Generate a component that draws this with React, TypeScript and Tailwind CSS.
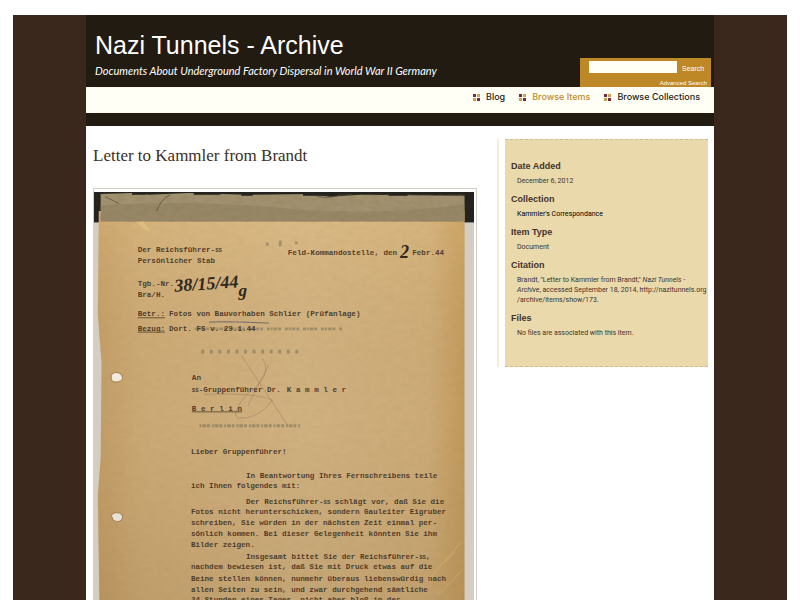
import React from "react";

type Line = { x: number; y: number; parts: string[] };

// "SS" is typed on a single key, so it is set smaller than the rest of the line.
const typed: Line[] = [
  { x: 46, y: 63, parts: ["Der Reichsführer-", "SS"] },
  { x: 46, y: 75, parts: ["Persönlicher Stab"] },
  { x: 204, y: 66, parts: ["Feld-Kommandostelle, den"] },
  { x: 335, y: 66, parts: ["Febr.44"] },
  { x: 46, y: 99, parts: ["Tgb.-Nr."] },
  { x: 46, y: 110, parts: ["Bra/H."] },
  { x: 79, y: 131, parts: ["Fotos von Bauvorhaben Schlier (Prüfanlage)"] },
  { x: 79, y: 146, parts: ["Dort. FS v. 29.1.44"] },
  { x: 103, y: 198, parts: ["An"] },
  { x: 103, y: 210, parts: ["", "SS", "-Gruppenführer Dr."] },
  { x: 203, y: 210, parts: ["K a m m l e r"] },
  { x: 102, y: 276, parts: ["Lieber Gruppenführer!"] },
  { x: 160, y: 301, parts: ["In Beantwortung Ihres Fernschreibens teile"] },
  { x: 102, y: 312, parts: ["ich Ihnen folgendes mit:"] },
  { x: 160, y: 328, parts: ["Der Reichsführer-", "SS", " schlägt vor, daß Sie die"] },
  { x: 102, y: 339, parts: ["Fotos nicht herunterschicken, sondern Gauleiter Eigruber"] },
  { x: 102, y: 351, parts: ["schreiben, Sie würden in der nächsten Zeit einmal per-"] },
  { x: 102, y: 362, parts: ["sönlich kommen. Bei dieser Gelegenheit könnten Sie ihm"] },
  { x: 102, y: 374, parts: ["Bilder zeigen."] },
  { x: 160, y: 386, parts: ["Insgesamt bittet Sie der Reichsführer-", "SS", ","] },
  { x: 102, y: 397, parts: ["nachdem bewiesen ist, daß Sie mit Druck etwas auf die"] },
  { x: 102, y: 409, parts: ["Beine stellen können, nunmehr überaus liebenswürdig nach"] },
  { x: 102, y: 421, parts: ["allen Seiten zu sein, und zwar durchgehend sämtliche"] },
  { x: 102, y: 432, parts: ["24 Stunden eines Tages, nicht aber bloß in der"] },
];

const underlined: Line[] = [
  { x: 46, y: 131, parts: ["Betr.:"] },
  { x: 46, y: 146, parts: ["Bezug:"] },
  { x: 103, y: 230, parts: ["B e r l i n"] },
];

function Letter() {
  return (
    <svg viewBox="0 0 400 450" className="block w-full" role="img" aria-label="Scan of the letter">
      <defs>
        <linearGradient id="paper" x1="0" y1="0" x2="1" y2="0">
          <stop offset="0" stopColor="#c49f68" />
          <stop offset="0.12" stopColor="#ceac78" />
          <stop offset="0.55" stopColor="#d3b483" />
          <stop offset="0.9" stopColor="#cfae7a" />
          <stop offset="1" stopColor="#c39b5d" />
        </linearGradient>
        <linearGradient id="shade" x1="0" y1="0" x2="0" y2="1">
          <stop offset="0" stopColor="#ffd994" stopOpacity="0.18" />
          <stop offset="0.5" stopColor="#8a6a3c" stopOpacity="0.04" />
          <stop offset="1" stopColor="#6a4a20" stopOpacity="0.16" />
        </linearGradient>
        <filter id="grain" x="0" y="0" width="1" height="1">
          <feTurbulence type="fractalNoise" baseFrequency="0.12 0.2" numOctaves="3" seed="4" />
          <feColorMatrix values="0 0 0 0 0.25  0 0 0 0 0.18  0 0 0 0 0.08  0.9 0 0 0 -0.3" />
        </filter>
      </defs>
      <rect width="400" height="450" fill="#d3cdc4" />
      <rect width="400" height="32" fill="#24231d" />
      <path d="M5 30 L4 130 L8 180 L7 280 L4 320 L6 450 H390 V20 H5Z" fill="url(#paper)" />
      <path d="M5 30 L4 130 L8 180 L7 280 L4 320 L6 450 H390 V20 H5Z" fill="url(#shade)" />
      <path d="M7 2 L40 1 L58 3 L100 1 L160 3 L230 2 L248 5 L280 3 L390 4 V31 H7Z" fill="#a19170" />
      <path d="M7 14 Q100 8 200 17 T390 13 V31 H7Z" fill="#8e8060" opacity="0.55" />
      <rect x="7" y="3" width="383" height="28" filter="url(#grain)" opacity="0.6" />
      <rect x="7" y="31" width="383" height="419" filter="url(#grain)" opacity="0.14" />
      <g fill="none" stroke="#4c4432" strokeWidth="1">
        <path d="M66 20 Q70 8 80 3 M230 2 Q242 9 260 3 M12 5 L26 12" opacity="0.7" />
        <path d="M40 2 h14 M105 2 h28 M155 3 h12 M220 3 h32 M310 3 h20" stroke="#24231d" strokeWidth="2" />
      </g>
      <path d="M44 31 l8 0 l7 10 l-6 -2Z" fill="#ecca80" opacity="0.5" />

      {/* Ink of the reverse side showing through */}
      <g fill="none" stroke="#66644f" strokeWidth="3" opacity="0.45">
        <path d="M106 144 H262" strokeDasharray="3 1 2 1 4 1 3 4" />
        <path d="M113 168 H220" strokeDasharray="3 6" strokeWidth="4" />
        <path d="M111 246 H218" strokeDasharray="2 1 4 1 3 2" />
        <path d="M196 51 v6 M213 52 v3 M181 55 h3" />
      </g>
      <g fill="none" stroke="#966b58" strokeWidth="1" opacity="0.42">
        <path d="M155 172 Q170 194 204 246 M177 175 Q190 192 160 214 Q145 232 151 238 Q173 240 188 219 Q169 211 116 213 M162 225 L184 182" />
      </g>
      <path d="M121 137 Q142 136 184 138" stroke="#56546a" strokeWidth="1" fill="none" opacity="0.8" />

      <g
        className="font-['Liberation_Mono',monospace] font-bold"
        fontSize="8"
        fill="#3a2b1b"
        fillOpacity="0.88"
      >
        {typed.map((line) => (
          <text key={`${line.x}-${line.y}`} x={line.x} y={line.y} className="whitespace-pre">
            {line.parts.map((part, i) => (
              <tspan key={i} fontSize={i === 1 ? 6 : 8}>
                {part}
              </tspan>
            ))}
          </text>
        ))}
        {underlined.map((line) => (
          <text key={line.y} x={line.x} y={line.y} className="underline">
            {line.parts[0]}
          </text>
        ))}
      </g>
      <g className="font-['Liberation_Serif',serif] italic" fill="#30271d">
        <text x="85" y="105" fontSize="19" className="font-bold" transform="rotate(-4 85 105)">
          38/15/44
        </text>
        <text x="152" y="109" fontSize="18" className="font-bold">
          g
        </text>
        <text x="322" y="69" fontSize="19" className="font-bold">
          2
        </text>
      </g>

      <g stroke="#a07a45" strokeWidth="1">
        <path d="M18 195 Q18 190 24 190 Q30 191 30 196 Q29 200 23 200 Q18 200 18 195Z" fill="#f1ece0" />
        <path d="M18 340 Q22 336 27 338 Q32 341 29 345 Q25 349 20 345Z" fill="#e6e1d9" />
      </g>
      <g fill="none" stroke="#ddb977" strokeWidth="1" opacity="0.5">
        <path d="M350 410 L387 368 M362 424 L388 398 M368 391 L380 379" />
      </g>
    </svg>
  );
}

function Bullet() {
  return (
    <svg viewBox="0 0 7 7" className="h-[7px] w-[7px] shrink-0" aria-hidden="true">
      <rect width="3" height="3" fill="#7c2740" />
      <rect x="4" width="3" height="3" fill="#cfa04c" />
      <rect y="4" width="3" height="3" fill="#cfa04c" />
      <rect x="4" y="4" width="3" height="3" fill="#7c2740" />
    </svg>
  );
}

function NavLink({ active, children }: { active?: boolean; children: React.ReactNode }) {
  return (
    <li className="flex items-center gap-[6px]">
      <Bullet />
      <a href="#" className={active ? "text-[#c48a2c]" : "text-[#231c17]"}>
        {children}
      </a>
    </li>
  );
}

function Field({ label, children }: { label: string; children: React.ReactNode }) {
  return (
    <div>
      <dt className="text-[9px] leading-[14px] font-bold">{label}</dt>
      <dd className="mt-[3px] pl-[6px] font-['Roboto',sans-serif] text-[7px] leading-[10px]">{children}</dd>
    </div>
  );
}

export default function App() {
  return (
    <div className="h-screen overflow-hidden bg-white px-[13px] pt-[15px] font-['Liberation_Sans',Arial,sans-serif]">
      <div className="min-h-full bg-[#3b281c]">
        <div className="mx-auto min-h-screen max-w-[628px] bg-white">
          <header className="flex h-[72px] items-end justify-between bg-[#211b12] pr-[3px] pl-[9px] text-white">
            <div className="pb-[9px]">
              <h1 className="text-[25px] leading-[30px]">Nazi Tunnels - Archive</h1>
              <p className="mt-1 font-['Lato',sans-serif] text-[11px] leading-[14px] whitespace-nowrap italic">
                Documents About Underground Factory Dispersal in World War II Germany
              </p>
            </div>
            <form
              className="flex h-[29px] w-[131px] flex-col justify-between bg-[#be8826] pt-[3px] pr-1 pl-[9px] text-[7px] leading-[8px]"
              onSubmit={(e) => e.preventDefault()}
            >
              <div className="flex items-center gap-[5px]">
                <input type="text" aria-label="Search the archive" className="h-[12px] w-[88px] bg-[#fffff6] px-1 text-black" />
                <button type="submit" className="pt-1">Search</button>
              </div>
              <a href="#" className="self-end text-[6px]">
                Advanced Search
              </a>
            </form>
          </header>
          <nav className="h-[26px] bg-[#fffff6] pt-[4px] pr-[14px]">
            <ul className="flex justify-end gap-[14px] font-['Inter',sans-serif] text-[9px] leading-[12px] font-medium">
              <NavLink>Blog</NavLink>
              <NavLink active>Browse Items</NavLink>
              <NavLink>Browse Collections</NavLink>
            </ul>
          </nav>
          <div className="h-[13px] bg-[#211b12]" />

          <div className="flex items-start gap-5 pt-[13px] pr-[6px] pl-[7px]">
            <main className="min-w-0 flex-1">
              <h2 className="pt-[7px] font-['Liberation_Serif',serif] text-[17px] leading-[20px] text-[#403025]">
                Letter to Kammler from Brandt
              </h2>
              <div className="mt-[22px] border border-[#cfd0c3] pt-[3px] pr-[2px]">
                <Letter />
              </div>
            </main>
            <aside className="w-[211px] shrink-0 border-l-2 border-[#f6eedb] pl-[6px]">
              <dl className="flex h-[228px] flex-col gap-[6px] border-y border-dashed border-[#cdbd91] bg-[#e9d9ab] pt-[19px] pl-[6px] text-[#43332b]">
                <Field label="Date Added">December 6, 2012</Field>
                <Field label="Collection">
                  <a href="#" className="text-black">
                    Kammler's Correspondance
                  </a>
                </Field>
                <Field label="Item Type">Document</Field>
                <Field label="Citation">
                  Brandt, "Letter to Kammler from Brandt," <em>Nazi Tunnels - Archive</em>, accessed September 18, 2014,
                  http://nazitunnels.org
                  <wbr />
                  /archive/items/show/173.
                </Field>
                <Field label="Files">No files are associated with this item.</Field>
              </dl>
            </aside>
          </div>
        </div>
      </div>
    </div>
  );
}
